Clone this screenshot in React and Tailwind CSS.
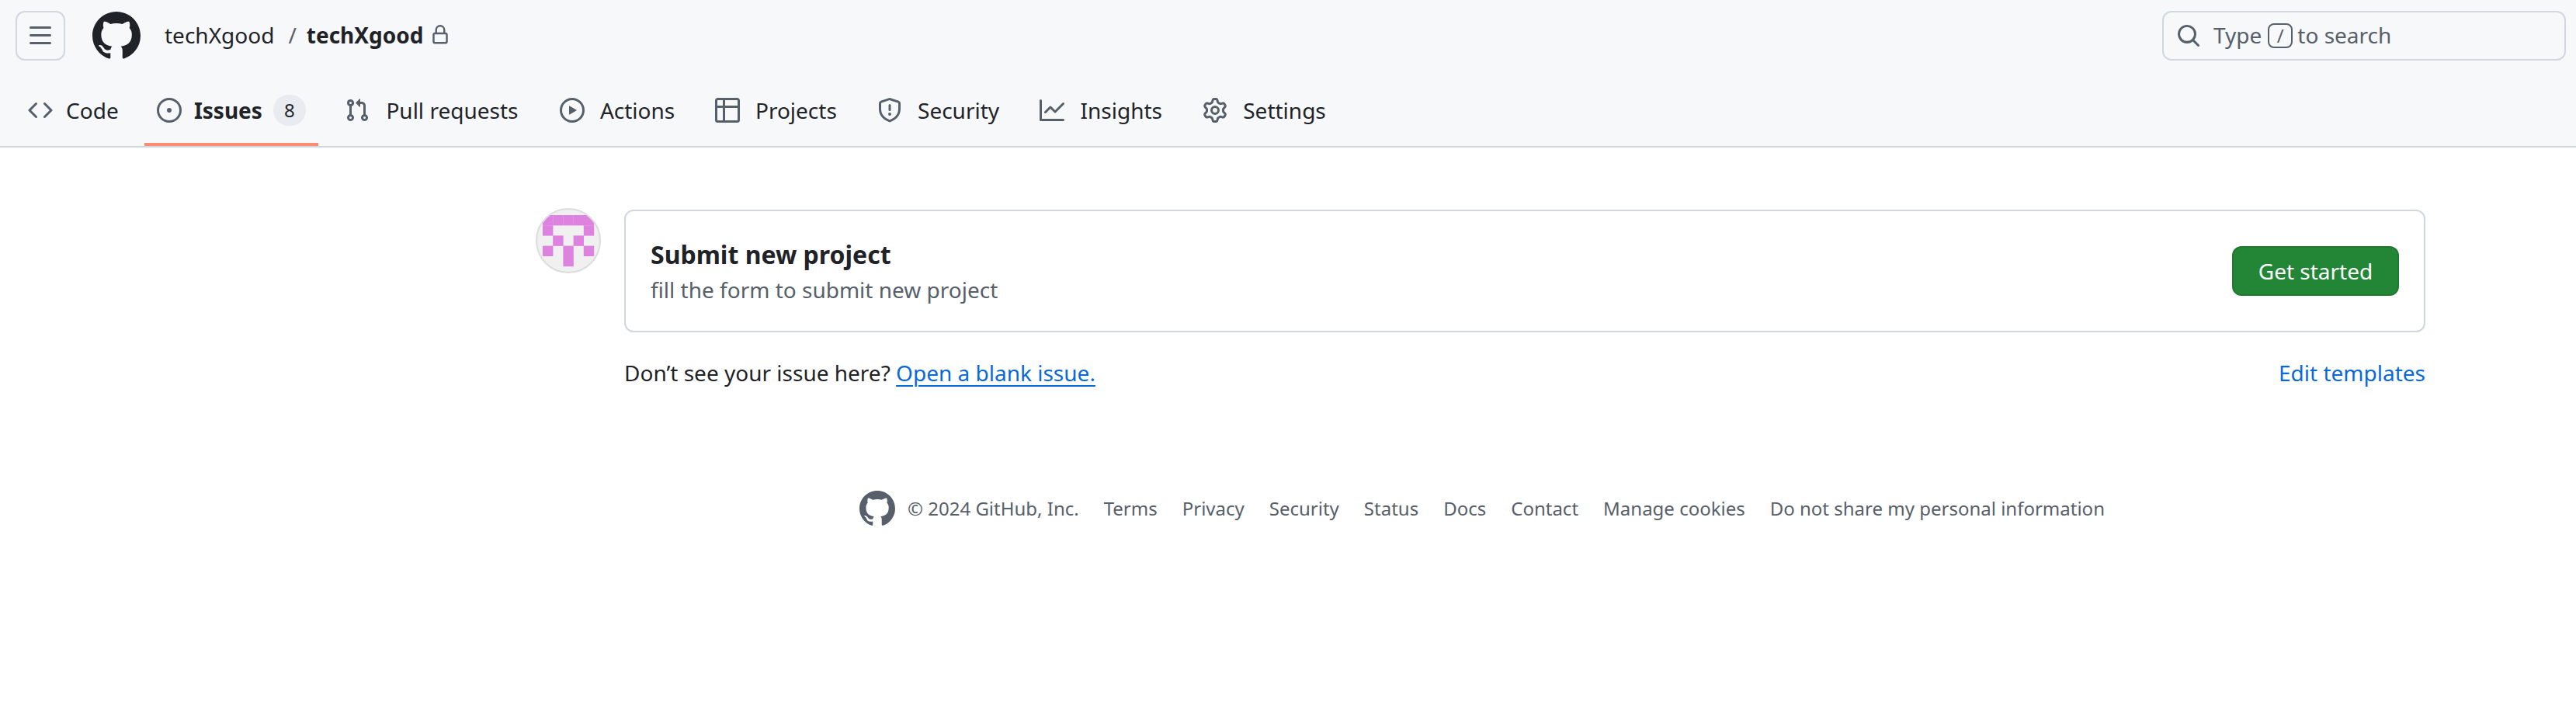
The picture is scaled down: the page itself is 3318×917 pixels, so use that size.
const PATHS = {
  bars: "M1 2.75A.75.75 0 0 1 1.75 2h12.5a.75.75 0 0 1 0 1.5H1.75A.75.75 0 0 1 1 2.75Zm0 5A.75.75 0 0 1 1.75 7h12.5a.75.75 0 0 1 0 1.5H1.75A.75.75 0 0 1 1 7.75ZM1.75 12h12.5a.75.75 0 0 1 0 1.5H1.75a.75.75 0 0 1 0-1.5Z",
  mark: "M8 0c4.42 0 8 3.58 8 8a8.013 8.013 0 0 1-5.45 7.59c-.4.08-.55-.17-.55-.38 0-.27.01-1.13.01-2.2 0-.75-.25-1.23-.54-1.48 1.78-.2 3.65-.88 3.65-3.95 0-.88-.31-1.59-.82-2.15.08-.2.36-1.02-.08-2.12 0 0-.67-.22-2.2.82-.64-.18-1.32-.27-2-.27-.68 0-1.36.09-2 .27-1.53-1.03-2.2-.82-2.2-.82-.44 1.1-.16 1.92-.08 2.12-.51.56-.82 1.28-.82 2.15 0 3.06 1.86 3.75 3.64 3.95-.23.2-.44.55-.51 1.07-.46.21-1.61.55-2.33-.66-.15-.24-.6-.83-1.23-.82-.67.01-.27.38.01.53.34.19.73.9.82 1.13.16.45.68 1.31 2.69.94 0 .67.01 1.3.01 1.49 0 .21-.15.45-.55.38A7.995 7.995 0 0 1 0 8c0-4.42 3.58-8 8-8Z",
  lock: "M4 4a4 4 0 0 1 8 0v2h.25c.966 0 1.75.784 1.75 1.75v5.5A1.75 1.75 0 0 1 12.25 15h-8.5A1.75 1.75 0 0 1 2 13.25v-5.5C2 6.784 2.784 6 3.75 6H4Zm8.25 3.5h-8.5a.25.25 0 0 0-.25.25v5.5c0 .138.112.25.25.25h8.5a.25.25 0 0 0 .25-.25v-5.5a.25.25 0 0 0-.25-.25ZM10.5 6V4a2.5 2.5 0 1 0-5 0v2Z",
  search: "M10.68 11.74a6 6 0 0 1-7.922-8.982 6 6 0 0 1 8.982 7.922l3.04 3.04a.749.749 0 0 1-.326 1.275.749.749 0 0 1-.734-.215ZM11.5 7a4.499 4.499 0 1 0-8.997 0A4.499 4.499 0 0 0 11.5 7Z",
  code: "m11.28 3.22 4.25 4.25a.75.75 0 0 1 0 1.06l-4.25 4.25a.749.749 0 0 1-1.275-.326.749.749 0 0 1 .215-.734L13.94 8l-3.72-3.72a.749.749 0 0 1 .326-1.275.749.749 0 0 1 .734.215Zm-6.56 0a.751.751 0 0 1 1.042.018.751.751 0 0 1 .018 1.042L2.06 8l3.72 3.72a.749.749 0 0 1-.326 1.275.749.749 0 0 1-.734-.215L.47 8.53a.75.75 0 0 1 0-1.06Z",
  issue: "M8 9.5a1.5 1.5 0 1 0 0-3 1.5 1.5 0 0 0 0 3ZM8 0a8 8 0 1 1 0 16A8 8 0 0 1 8 0ZM1.5 8a6.5 6.5 0 1 0 13 0 6.5 6.5 0 0 0-13 0Z",
  pull: "M1.5 3.25a2.25 2.25 0 1 1 3 2.122v5.256a2.251 2.251 0 1 1-1.5 0V5.372A2.25 2.25 0 0 1 1.5 3.25Zm5.677-.177L9.573.677A.25.25 0 0 1 10 .854V2.5h1A2.5 2.5 0 0 1 13.5 5v5.628a2.251 2.251 0 1 1-1.5 0V5a1 1 0 0 0-1-1h-1v1.646a.25.25 0 0 1-.427.177L7.177 3.427a.25.25 0 0 1 0-.354ZM3.75 2.5a.75.75 0 1 0 0 1.5.75.75 0 0 0 0-1.5Zm0 9.5a.75.75 0 1 0 0 1.5.75.75 0 0 0 0-1.5Zm8.25.75a.75.75 0 1 0 1.5 0 .75.75 0 0 0-1.5 0Z",
  play: "M8 0a8 8 0 1 1 0 16A8 8 0 0 1 8 0ZM1.5 8a6.5 6.5 0 1 0 13 0 6.5 6.5 0 0 0-13 0Zm4.879-2.773 4.264 2.559a.25.25 0 0 1 0 .428l-4.264 2.559A.25.25 0 0 1 6 10.559V5.442a.25.25 0 0 1 .379-.215Z",
  table: "M0 1.75C0 .784.784 0 1.75 0h12.5C15.216 0 16 .784 16 1.75v12.5A1.75 1.75 0 0 1 14.25 16H1.75A1.75 1.75 0 0 1 0 14.25ZM6.5 6.5v8h7.75a.25.25 0 0 0 .25-.25V6.5Zm8-1.5V1.75a.25.25 0 0 0-.25-.25H6.5V5Zm-13 1.5v7.75c0 .138.112.25.25.25H5v-8ZM5 5V1.5H1.75a.25.25 0 0 0-.25.25V5Z",
  shield: "M7.467.133a1.748 1.748 0 0 1 1.066 0l5.25 1.68A1.75 1.75 0 0 1 15 3.48V7c0 1.566-.32 3.182-1.303 4.682-.983 1.498-2.585 2.813-5.032 3.855a1.697 1.697 0 0 1-1.33 0c-2.447-1.042-4.049-2.357-5.032-3.855C1.32 10.182 1 8.566 1 7V3.48a1.75 1.75 0 0 1 1.217-1.667Zm.61 1.429a.25.25 0 0 0-.153 0l-5.25 1.68a.25.25 0 0 0-.174.238V7c0 1.358.275 2.666 1.057 3.86.784 1.194 2.121 2.34 4.366 3.297a.196.196 0 0 0 .154 0c2.245-.956 3.582-2.104 4.366-3.298C13.225 9.666 13.5 8.36 13.5 7V3.48a.251.251 0 0 0-.174-.237l-5.25-1.68ZM8.75 4.75v3a.75.75 0 0 1-1.5 0v-3a.75.75 0 0 1 1.5 0ZM9 10.5a1 1 0 1 1-2 0 1 1 0 0 1 2 0Z",
  graph: "M1.5 1.75V13.5h13.75a.75.75 0 0 1 0 1.5H.75a.75.75 0 0 1-.75-.75V1.75a.75.75 0 0 1 1.5 0Zm14.28 2.53-5.25 5.25a.75.75 0 0 1-1.06 0L7 7.06 4.28 9.78a.751.751 0 0 1-1.042-.018.751.751 0 0 1-.018-1.042l3.25-3.25a.75.75 0 0 1 1.06 0L10 7.94l4.72-4.72a.751.751 0 0 1 1.042.018.751.751 0 0 1 .018 1.042Z",
  gear: "M8 0a8.2 8.2 0 0 1 .701.031C9.444.095 9.99.645 10.16 1.29l.288 1.107c.018.066.079.158.212.224.231.114.454.243.668.386.123.082.233.09.299.071l1.103-.303c.644-.176 1.392.021 1.82.63.27.385.506.792.704 1.218.315.675.111 1.422-.364 1.891l-.814.806c-.049.048-.098.147-.088.294.016.257.016.515 0 .772-.01.147.038.246.088.294l.814.806c.475.469.679 1.216.364 1.891a7.977 7.977 0 0 1-.704 1.217c-.428.61-1.176.807-1.82.63l-1.102-.302c-.067-.019-.177-.011-.3.071a5.909 5.909 0 0 1-.668.386c-.133.066-.194.158-.211.224l-.29 1.106c-.168.646-.715 1.196-1.458 1.26a8.006 8.006 0 0 1-1.402 0c-.743-.064-1.289-.614-1.458-1.26l-.289-1.106c-.018-.066-.079-.158-.212-.224a5.738 5.738 0 0 1-.668-.386c-.123-.082-.233-.09-.299-.071l-1.103.303c-.644.176-1.392-.021-1.82-.63a8.12 8.12 0 0 1-.704-1.218c-.315-.675-.111-1.422.363-1.891l.815-.806c.05-.048.098-.147.088-.294a6.214 6.214 0 0 1 0-.772c.01-.147-.038-.246-.088-.294l-.815-.806C.635 6.045.431 5.298.746 4.623a7.92 7.92 0 0 1 .704-1.217c.428-.61 1.176-.807 1.82-.63l1.102.302c.067.019.177.011.3-.071.214-.143.437-.272.668-.386.133-.066.194-.158.211-.224l.29-1.106C6.009.645 6.556.095 7.299.03 7.53.01 7.764 0 8 0Zm-.571 1.525c-.036.003-.108.036-.137.146l-.289 1.105c-.147.561-.549.967-.998 1.189-.173.086-.34.183-.5.29-.417.278-.97.423-1.529.27l-1.103-.303c-.109-.03-.175.016-.195.045-.22.312-.412.644-.573.99-.014.031-.021.11.059.19l.815.806c.411.406.562.957.53 1.456a4.709 4.709 0 0 0 0 .582c.032.499-.119 1.05-.53 1.456l-.815.806c-.081.08-.073.159-.059.19.162.346.353.677.573.989.02.03.085.076.195.046l1.102-.303c.56-.153 1.113-.008 1.53.27.161.107.328.204.501.29.447.222.85.629.997 1.189l.289 1.105c.029.109.101.143.137.146a6.6 6.6 0 0 0 1.142 0c.036-.003.108-.036.137-.146l.289-1.105c.147-.561.549-.967.998-1.189.173-.086.34-.183.5-.29.417-.278.97-.423 1.529-.27l1.103.303c.109.029.175-.016.195-.045.22-.313.411-.644.573-.99.014-.031.021-.11-.059-.19l-.815-.806c-.411-.406-.562-.957-.53-1.456a4.709 4.709 0 0 0 0-.582c-.032-.499.119-1.05.53-1.456l.815-.806c.081-.08.073-.159.059-.19a6.464 6.464 0 0 0-.573-.989c-.02-.03-.085-.076-.195-.046l-1.102.303c-.56.153-1.113.008-1.53-.27a4.44 4.44 0 0 0-.501-.29c-.447-.222-.85-.629-.997-1.189l-.289-1.105c-.029-.11-.101-.143-.137-.146a6.6 6.6 0 0 0-1.142 0ZM11 8a3 3 0 1 1-6 0 3 3 0 0 1 6 0ZM9.5 8a1.5 1.5 0 1 0-3.001.001A1.5 1.5 0 0 0 9.5 8Z",
};

function Octicon({ name, className }) {
  return (
    <svg viewBox="0 0 16 16" fill="currentColor" className={className}>
      <path d={PATHS[name]} />
    </svg>
  );
}

const tabs = [
  { label: "Code", icon: "code" },
  { label: "Issues", icon: "issue", count: 8, active: true },
  { label: "Pull requests", icon: "pull" },
  { label: "Actions", icon: "play" },
  { label: "Projects", icon: "table" },
  { label: "Security", icon: "shield" },
  { label: "Insights", icon: "graph" },
  { label: "Settings", icon: "gear" },
];

const footerLinks = ["Terms", "Privacy", "Security", "Status", "Docs", "Contact", "Manage cookies", "Do not share my personal information"];

// 5x5 identicon cells as [col, row]
const cells = [
  [0, 0], [1, 0], [2, 0], [3, 0], [4, 0],
  [0, 1], [4, 1],
  [1, 2], [3, 2],
  [0, 3], [2, 3], [4, 3],
  [2, 4],
];

function Identicon() {
  return (
    <div className="w-[84px] h-[84px] shrink-0 -mt-[2px] rounded-full overflow-hidden border-2 border-[#dcdcdc] bg-[#f0f0f0]">
      <svg viewBox="0 0 80 80" className="w-full h-full">
        {cells.map(([c, r]) => (
          <rect key={`${c}-${r}`} x={7 + c * 13.2} y={7 + r * 13.2} width="13.4" height="13.4" fill="#de82e0" />
        ))}
      </svg>
    </div>
  );
}

export default function App() {
  return (
    <div className="min-h-screen bg-white text-[28px] leading-[40px] text-[#1f2328] font-['Noto_Sans',sans-serif]">
      {/* Header */}
      <header className="bg-[#f6f8fa] border-b-2 border-[#d0d7de] pt-[14px]">
        <div className="flex items-center px-[20px] h-16">
          <button className="w-16 h-16 flex items-center justify-center rounded-xl border-2 border-[#d0d7de] text-[#57606a]">
            <Octicon name="bars" className="w-8 h-8" />
          </button>
          <Octicon name="mark" className="w-[62px] h-[62px] ml-[35px] text-[#1f2328]" />
          <span className="ml-[31px] -mt-[3px]">techXgood</span>
          <span className="ml-[18px] -mt-[3px] text-[#57606a]">/</span>
          <span className="ml-[13px] -mt-[3px] font-bold">techXgood</span>
          <Octicon name="lock" className="w-[26px] h-[26px] ml-[9px] -mt-[3px] text-[#57606a]" />
          <div className="ml-auto mr-[-7px] w-[520px] h-16 flex items-center rounded-xl border-2 border-[#d0d7de] pl-[16px] text-[#57606a]">
            <Octicon name="search" className="w-8 h-8" />
            <span className="ml-[16px] -mt-[3px]">Type</span>
            <kbd className="ml-[8px] mr-[6px] w-8 h-8 flex items-center justify-center rounded-lg border-2 border-[#57606a] font-['Noto_Sans',sans-serif] text-[24px]">/</kbd>
            <span className="-mt-[3px]">to search</span>
          </div>
        </div>
        <nav className="flex gap-4 px-[20px] mt-[18px] h-[92px]">
          {tabs.map((t) => (
            <a
              key={t.label}
              className={`flex items-center gap-4 px-4 border-b-4 pt-1 ${t.active ? "border-[#fd8c73] mr-[2px]" : "border-transparent"}`}
            >
              <Octicon name={t.icon} className="w-8 h-8 text-[#57606a]" />
              {/* hidden bold copy keeps the tab width stable, as on github */}
              <span className={`inline-grid text-center ${t.active ? "font-bold" : ""}`}>
                <span className="h-0 invisible font-bold">{t.label}</span>
                <span>{t.label}</span>
              </span>
              {t.count && (
                <span className="w-[42px] h-10 -ml-[2px] flex items-center justify-center rounded-full bg-[#e8ebef] text-[24px]">
                  {t.count}
                </span>
              )}
            </a>
          ))}
        </nav>
      </header>

      {/* Template chooser */}
      <main className="ml-[690px] w-[2434px] pt-20">
        <div className="flex gap-[30px]">
          <Identicon />
          <div className="flex-1">
            <div className="h-[158px] flex items-center justify-between rounded-xl border-2 border-[#d0d7de] pl-[32px] pr-[32px]">
              <div>
                <div className="text-[32px] font-bold leading-[44px] mb-[3px]">Submit new project</div>
                <div className="text-[#57606a]">fill the form to submit new project</div>
              </div>
              <button className="w-[215px] h-16 rounded-xl border-2 border-[#1f7a30] bg-[#238636] text-white">
                Get started
              </button>
            </div>
            <div className="flex justify-between mt-[32px]">
              <p>
                Don’t see your issue here?{" "}
                <a className="text-[#0969da] underline decoration-2 underline-offset-[5px]">Open a blank issue.</a>
              </p>
              <a className="text-[#0969da]">Edit templates</a>
            </div>
          </div>
        </div>

        {/* Footer */}
        <footer className="mt-[132px] pl-1 flex items-center justify-center text-[24px] leading-9 text-[#57606a]">
          <Octicon name="mark" className="w-[46px] h-[46px] mr-[16px]" />
          <span>© 2024 GitHub, Inc.</span>
          <div className="flex gap-8 ml-8">
            {footerLinks.map((l) => (
              <a key={l}>{l}</a>
            ))}
          </div>
        </footer>
      </main>
    </div>
  );
}
